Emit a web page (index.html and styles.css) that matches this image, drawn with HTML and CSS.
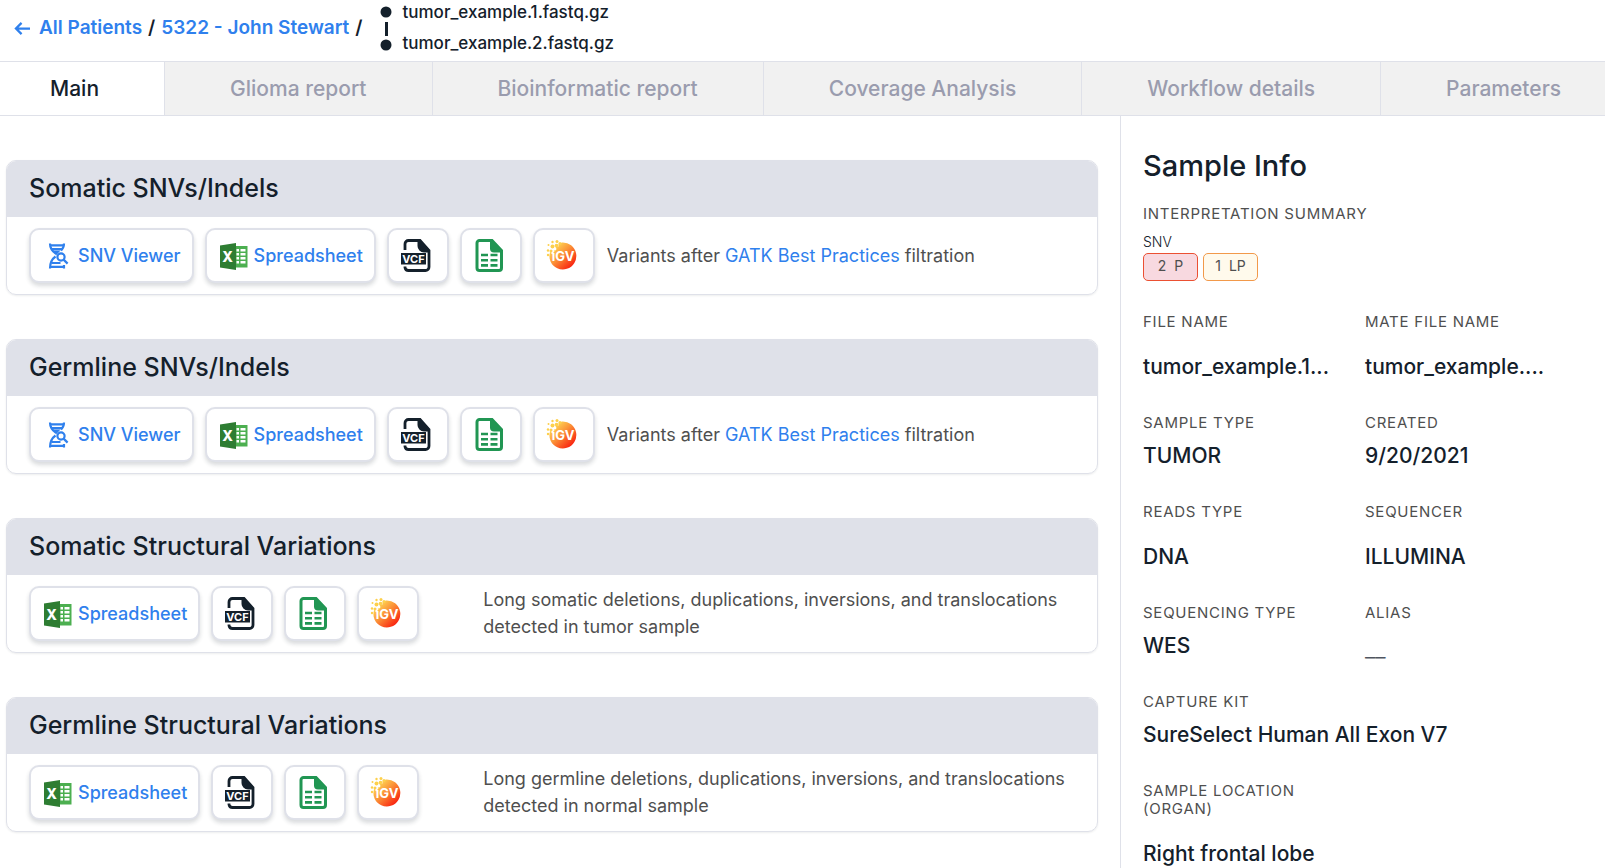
FILE: index.html
```html
<!DOCTYPE html>
<html lang="en">
<head>
<meta charset="utf-8">
<meta name="viewport" content="width=device-width, initial-scale=1">
<title>5322 - John Stewart</title>
<link rel="stylesheet" href="styles.css">
</head>
<body>
<svg class="sprite" aria-hidden="true">
  <defs>
    <linearGradient id="igv-fill" x1="0.1" y1="0.1" x2="0.85" y2="0.9">
      <stop offset="0" stop-color="#ffe35a"/>
      <stop offset="0.45" stop-color="#fb9438"/>
      <stop offset="1" stop-color="#f9200f"/>
    </linearGradient>
    <symbol id="i-dna" viewBox="0 0 30 30">
      <g fill="none" stroke="#2f80ed" stroke-width="2.2">
        <path d="M7 2.500c0 5 2.500 8 6 10.300"/>
        <path d="M21 2.500c0 3-1 5-3 7"/>
        <path d="M12.500 15.500C9 18 7 21.500 7 27.500"/>
        <path d="M7 4.300h14M8.500 8.200h11M9 22h8.500M7 25.800h14M21 27.500v-3.500"/>
        <circle cx="18" cy="16" r="3.600"/>
        <path d="M20.600 18.600l4 4"/>
      </g>
      <path d="M10.500 9.500h7l-4.500 5z" fill="#2f80ed"/>
    </symbol>
    <symbol id="i-excel" viewBox="0 0 30 30">
      <path d="M15 5h13.500v21.500H15z" fill="#4caf50"/>
      <path d="M17.500 8h2.500v2.500h-2.500zm4 0h5v2.500h-5zM17.500 12h2.500v2.500h-2.500zm4 0h5v2.500h-5zM17.500 16h2.500v2.500h-2.500zm4 0h5v2.500h-5zM17.500 20h2.500v2.500h-2.500zm4 0h5v2.500h-5z" fill="#fff"/>
      <path d="M1 4.500L17 2v27L1 26.500z" fill="#2e7d32"/>
      <text x="8.700" y="20.500" text-anchor="middle" font-family="Inter, sans-serif" font-size="14" font-weight="800" fill="#fff">X</text>
    </symbol>
    <symbol id="i-vcf" viewBox="0 0 34 34">
      <path d="M6 12V6a3.500 3.500 0 0 1 3.500-3.500H21l9 10V29a3.500 3.500 0 0 1-3.500 3.500h-17A3.500 3.500 0 0 1 6 29.500V28.500" fill="none" stroke="#14202b" stroke-width="2.800"/>
      <path d="M18.500 2h3l9 10v2.500H25a6.500 6.500 0 0 1-6.500-6.500z" fill="#14202b"/>
      <path d="M2 15h25v11.500H2z" fill="#14202b"/>
      <text x="14.500" y="24.700" text-anchor="middle" font-family="Inter, sans-serif" font-size="11" font-weight="700" fill="#fff">VCF</text>
    </symbol>
    <symbol id="i-sheet" viewBox="0 0 34 34">
      <path d="M7.500 2.500H20l9.500 10V30a2.500 2.500 0 0 1-2.500 2.500H7.500A2.500 2.500 0 0 1 5 30V5a2.500 2.500 0 0 1 2.500-2.500z" fill="none" stroke="#219653" stroke-width="3"/>
      <path d="M18 2h2.500L30 12v2.500h-8a4 4 0 0 1-4-4z" fill="#219653"/>
      <path d="M9 17h7M18.500 17h7M9 22.200h7M18.500 22.200h7M9 27.400h7M18.500 27.400h7" stroke="#219653" stroke-width="2.600"/>
    </symbol>
    <symbol id="i-igv" viewBox="0 0 34 34">
      <path d="M17 4.500a13.500 13.500 0 1 1-11.500 19c-2-5-1-9 1-11.500h4V8.500h3V6z" fill="url(#igv-fill)"/>
      <g fill="#fdd04c">
        <circle cx="7.500" cy="4" r="1.200"/><circle cx="12" cy="3.500" r="1.500"/><circle cx="3.500" cy="7" r="1"/>
        <circle cx="7.500" cy="8.500" r="2"/><circle cx="11.500" cy="7.500" r="1.800"/><circle cx="3" cy="12.500" r="1.200"/>
        <circle cx="6" cy="13" r="1.500"/><circle cx="3" cy="17" r="1.200"/><circle cx="15" cy="5.500" r="1.500"/>
      </g>
      <circle cx="10" cy="11" r="1.400" fill="#fff"/><circle cx="7.500" cy="15" r="1.200" fill="#fff"/>
      <text x="18" y="23" text-anchor="middle" font-family="Inter, sans-serif" font-size="13" font-weight="700" fill="#fff">iGV</text>
    </symbol>
  </defs>
</svg>

<header class="topbar">
  <nav class="crumbs" aria-label="Breadcrumb">
    <a class="crumb-back" href="#patients"><svg class="arrow" viewBox="0 0 18 16" aria-hidden="true"><path d="M17 8H2M8 2L2 8l6 6" fill="none" stroke="#2f80ed" stroke-width="2.400"/></svg>All Patients</a>
    <span>/</span>
    <a href="#patient">5322 - John Stewart</a>
    <span>/</span>
  </nav>
  <div class="files">
    <svg class="link-mark" viewBox="0 0 12 46" aria-hidden="true"><g fill="#14202b"><circle cx="6" cy="6" r="5.500"/><path d="M5 16h3v14H5z"/><circle cx="6" cy="39" r="5.500"/></g></svg>
    <div class="file-names"><span>tumor_example.1.fastq.gz</span><span>tumor_example.2.fastq.gz</span></div>
  </div>
</header>

<nav class="tabs" aria-label="Sections">
  <a class="tab tab-active" href="#main" aria-current="page">Main</a>
  <a class="tab" href="#glioma">Glioma report</a>
  <a class="tab" href="#bioinformatic">Bioinformatic report</a>
  <a class="tab" href="#coverage">Coverage Analysis</a>
  <a class="tab" href="#workflow">Workflow details</a>
  <a class="tab" href="#parameters">Parameters</a>
</nav>

<div class="page">
  <main class="results">
    <section class="card">
      <h2 class="card-title">Somatic SNVs/Indels</h2>
      <div class="card-body">
        <div class="actions">
          <button class="btn" type="button"><svg class="icon" aria-hidden="true"><use href="#i-dna"/></svg>SNV Viewer</button>
          <button class="btn" type="button"><svg class="icon" aria-hidden="true"><use href="#i-excel"/></svg>Spreadsheet</button>
          <button class="btn btn-icon" type="button" aria-label="VCF"><svg class="icon-lg" aria-hidden="true"><use href="#i-vcf"/></svg></button>
          <button class="btn btn-icon" type="button" aria-label="Table"><svg class="icon-lg" aria-hidden="true"><use href="#i-sheet"/></svg></button>
          <button class="btn btn-icon" type="button" aria-label="IGV"><svg class="icon-lg" aria-hidden="true"><use href="#i-igv"/></svg></button>
        </div>
        <p class="note">Variants after <a href="#gatk">GATK Best Practices</a> filtration</p>
      </div>
    </section>

    <section class="card">
      <h2 class="card-title">Germline SNVs/Indels</h2>
      <div class="card-body">
        <div class="actions">
          <button class="btn" type="button"><svg class="icon" aria-hidden="true"><use href="#i-dna"/></svg>SNV Viewer</button>
          <button class="btn" type="button"><svg class="icon" aria-hidden="true"><use href="#i-excel"/></svg>Spreadsheet</button>
          <button class="btn btn-icon" type="button" aria-label="VCF"><svg class="icon-lg" aria-hidden="true"><use href="#i-vcf"/></svg></button>
          <button class="btn btn-icon" type="button" aria-label="Table"><svg class="icon-lg" aria-hidden="true"><use href="#i-sheet"/></svg></button>
          <button class="btn btn-icon" type="button" aria-label="IGV"><svg class="icon-lg" aria-hidden="true"><use href="#i-igv"/></svg></button>
        </div>
        <p class="note">Variants after <a href="#gatk">GATK Best Practices</a> filtration</p>
      </div>
    </section>

    <section class="card">
      <h2 class="card-title">Somatic Structural Variations</h2>
      <div class="card-body card-body-split">
        <div class="actions">
          <button class="btn" type="button"><svg class="icon" aria-hidden="true"><use href="#i-excel"/></svg>Spreadsheet</button>
          <button class="btn btn-icon" type="button" aria-label="VCF"><svg class="icon-lg" aria-hidden="true"><use href="#i-vcf"/></svg></button>
          <button class="btn btn-icon" type="button" aria-label="Table"><svg class="icon-lg" aria-hidden="true"><use href="#i-sheet"/></svg></button>
          <button class="btn btn-icon" type="button" aria-label="IGV"><svg class="icon-lg" aria-hidden="true"><use href="#i-igv"/></svg></button>
        </div>
        <p class="note">Long somatic deletions, duplications, inversions, and translocations detected in tumor sample</p>
      </div>
    </section>

    <section class="card">
      <h2 class="card-title">Germline Structural Variations</h2>
      <div class="card-body card-body-split">
        <div class="actions">
          <button class="btn" type="button"><svg class="icon" aria-hidden="true"><use href="#i-excel"/></svg>Spreadsheet</button>
          <button class="btn btn-icon" type="button" aria-label="VCF"><svg class="icon-lg" aria-hidden="true"><use href="#i-vcf"/></svg></button>
          <button class="btn btn-icon" type="button" aria-label="Table"><svg class="icon-lg" aria-hidden="true"><use href="#i-sheet"/></svg></button>
          <button class="btn btn-icon" type="button" aria-label="IGV"><svg class="icon-lg" aria-hidden="true"><use href="#i-igv"/></svg></button>
        </div>
        <p class="note">Long germline deletions, duplications, inversions, and translocations detected in normal sample</p>
      </div>
    </section>
  </main>

  <aside class="info">
    <h1 class="info-title">Sample Info</h1>
    <h2 class="label">Interpretation summary</h2>
    <p class="kind">SNV</p>
    <div class="badges">
      <span class="badge badge-p"><span>2</span><span>P</span></span>
      <span class="badge badge-lp"><span>1</span><span>LP</span></span>
    </div>
    <dl class="fields">
      <div class="field field-loose"><dt class="label">File name</dt><dd class="value">tumor_example.1...</dd></div>
      <div class="field field-loose"><dt class="label">Mate file name</dt><dd class="value">tumor_example....</dd></div>
      <div class="field"><dt class="label">Sample type</dt><dd class="value">TUMOR</dd></div>
      <div class="field"><dt class="label">Created</dt><dd class="value">9/20/2021</dd></div>
      <div class="field field-loose"><dt class="label">Reads type</dt><dd class="value">DNA</dd></div>
      <div class="field field-loose"><dt class="label">Sequencer</dt><dd class="value">ILLUMINA</dd></div>
      <div class="field"><dt class="label">Sequencing type</dt><dd class="value">WES</dd></div>
      <div class="field"><dt class="label">Alias</dt><dd class="value value-empty">__</dd></div>
      <div class="field field-wide"><dt class="label">Capture kit</dt><dd class="value">SureSelect Human All Exon V7</dd></div>
      <div class="field field-loose"><dt class="label">Sample location (organ)</dt><dd class="value">Right frontal lobe</dd></div>
    </dl>
  </aside>
</div>
</body>
</html>
```

FILE: styles.css
```css
* { box-sizing: border-box; }

body {
  margin: 0;
  min-height: 100vh;
  display: flex;
  flex-direction: column;
  overflow: hidden;
  background: #fff;
  color: #14202b;
  font-family: Inter, "Liberation Sans", sans-serif;
}

h1, h2, p, dl, dd { margin: 0; }

a { color: #2f80ed; text-decoration: none; }

.sprite { position: absolute; width: 0; height: 0; }

.topbar {
  display: flex;
  align-items: flex-start;
  gap: 17px;
  height: 61px;
  padding-left: 14px;
}

.crumbs {
  display: flex;
  gap: 6px;
  padding-top: 16px;
  font-size: 19px;
  font-weight: 600;
  line-height: 24px;
  white-space: nowrap;
}

.crumb-back { display: flex; align-items: center; gap: 8px; }

.arrow { width: 17px; height: 15px; }

.files { display: flex; gap: 11px; padding-top: 6px; }

.link-mark { width: 12px; height: 46px; }

.file-names {
  display: flex;
  flex-direction: column;
  gap: 11px;
  margin-top: -4px;
  font-size: 17px;
  font-weight: 500;
  line-height: 20px;
}

.tabs {
  display: flex;
  height: 55px;
  overflow: hidden;
  border-top: 1px solid #dfe1e9;
  border-bottom: 1px solid #dfe1e9;
  background: #f1f1f1;
}

.tab {
  flex: none;
  padding: 0 65px;
  border-left: 1px solid #dfe1e9;
  color: #9a9cae;
  font-size: 21px;
  font-weight: 500;
  line-height: 53px;
  white-space: nowrap;
}

.tab-active {
  padding-left: 50px;
  border-left: 0;
  background: #fff;
  color: #14202b;
}

.page { display: flex; flex: 1; min-height: 0; }

.results {
  display: flex;
  flex: 1;
  flex-direction: column;
  gap: 44px;
  padding: 44px 22px 44px 6px;
}

.card {
  overflow: hidden;
  border: 1px solid #dfe1e9;
  border-radius: 10px;
  box-shadow: 0 1px 2px rgba(20, 32, 43, 0.08);
}

.card-title {
  padding: 11px 22px 13px;
  background: #dfe1e9;
  font-size: 25px;
  font-weight: 500;
  line-height: 32px;
}

.card-body {
  display: flex;
  align-items: center;
  gap: 12px;
  padding: 11px 22px;
}

.card-body-split { gap: 64px; }

.actions { display: flex; gap: 11px; }

.btn {
  display: flex;
  align-items: center;
  gap: 5px;
  height: 55px;
  padding: 0 11px 0 12px;
  border: 2px solid #dfe1e9;
  border-radius: 10px;
  background: #fff;
  box-shadow: 0 3px 4px rgba(20, 32, 43, 0.16);
  color: #2f80ed;
  font: 500 18px Inter, "Liberation Sans", sans-serif;
  white-space: nowrap;
}

.btn-icon { padding: 0 14px 2px 10px; }

.icon { width: 30px; height: 30px; }

.icon-lg { width: 34px; height: 34px; }

.note {
  flex: 1;
  padding-bottom: 1px;
  color: #4f4f4f;
  font-size: 18px;
  line-height: 27px;
}

.info {
  flex: none;
  width: 485px;
  padding: 32px 22px 0;
  border-left: 1px solid #dfe1e9;
}

.info-title {
  margin-bottom: 21px;
  font-size: 29px;
  font-weight: 500;
  line-height: 36px;
}

.label {
  color: #4f4f4f;
  font-size: 15px;
  font-weight: 400;
  letter-spacing: 0.05em;
  line-height: 18px;
  text-transform: uppercase;
}

.kind {
  margin-top: 11px;
  font-size: 14px;
  font-weight: 300;
  line-height: 16px;
}

.badges { display: flex; gap: 5px; margin-top: 3px; }

.badge {
  display: flex;
  justify-content: center;
  gap: 8px;
  min-width: 55px;
  height: 28px;
  border: 1px solid;
  border-radius: 5px;
  color: #4f4f4f;
  font-size: 14px;
  line-height: 24px;
}

.badge-p { border-color: #eb5032; background: #f8d9e0; }

.badge-lp { border-color: #f2994a; background: #fffaec; }

.fields {
  display: grid;
  grid-template-columns: 184px 184px;
  column-gap: 38px;
  row-gap: 32px;
  margin-top: 32px;
}

.field-wide { grid-column: 1 / -1; }

.value {
  margin-top: 9px;
  font-size: 21px;
  font-weight: 500;
  line-height: 30px;
  white-space: nowrap;
}

.field-loose .value { margin-top: 21px; }

.value-empty {
  margin-top: 17px;
  color: #4f5560;
  font-size: 23px;
  font-weight: 300;
  line-height: 20px;
}
```
